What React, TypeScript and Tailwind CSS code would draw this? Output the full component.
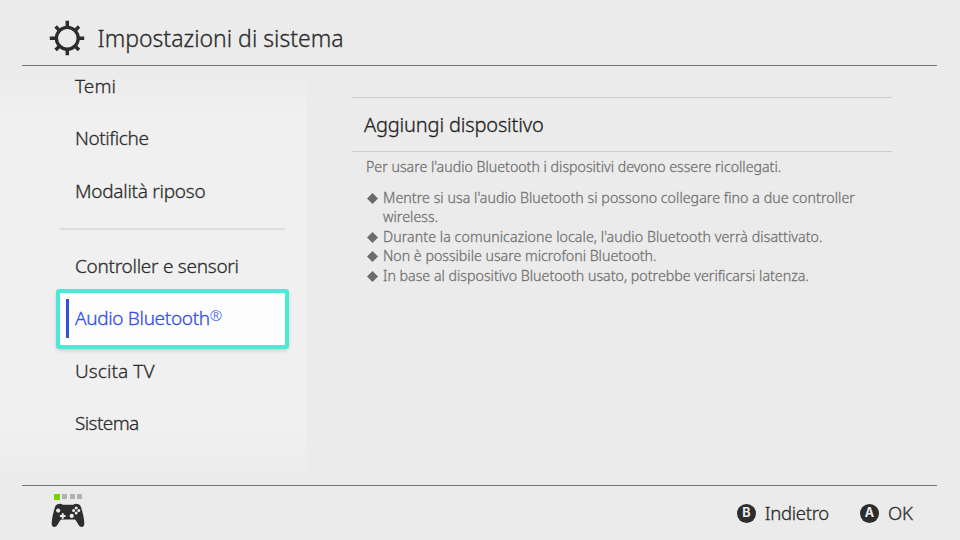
import clsx from "clsx";

type NavItem = { label: string; mark?: string; tracking: string; selected?: boolean; divider?: boolean };

const navItems: NavItem[] = [
  { label: "Temi", tracking: "tracking-[0.1px]" },
  { label: "Notifiche", tracking: "tracking-[-0.4px]" },
  { label: "Modalità riposo", tracking: "tracking-[-0.27px]" },
  { label: "Controller e sensori", tracking: "tracking-[-0.27px]", divider: true },
  { label: "Audio Bluetooth", mark: "®", tracking: "tracking-[-0.33px]", selected: true },
  { label: "Uscita TV", tracking: "tracking-[0.08px]" },
  { label: "Sistema", tracking: "tracking-[-0.6px]" },
];

const notes = [
  { lines: ["Mentre si usa l'audio Bluetooth si possono collegare fino a due controller", "wireless."], tracking: "tracking-[0.05px]" },
  { lines: ["Durante la comunicazione locale, l'audio Bluetooth verrà disattivato."], tracking: "tracking-[0.07px]" },
  { lines: ["Non è possibile usare microfoni Bluetooth."], tracking: "tracking-[0px]" },
  { lines: ["In base al dispositivo Bluetooth usato, potrebbe verificarsi latenza."], tracking: "tracking-[0.01px]" },
];

function GearIcon() {
  return (
    <svg width="36" height="36" viewBox="0 0 36 36" fill="none" stroke="#2d2d2d">
      <circle cx="18.3" cy="18.3" r="10.9" strokeWidth="3.3" />
      <path
        strokeWidth="3.5"
        d="M18.3 .8V7M18.3 29v6.2M.8 18.3H7M29 18.3h6.2M6.6 6.6l3.8 3.8M26.2 26.2l3.8 3.8M30 6.6l-3.8 3.8M10.4 26.2l-3.8 3.8"
      />
    </svg>
  );
}

function ControllerIcon() {
  return (
    <svg width="34" height="25" viewBox="0 0 34 25">
      <path
        fill="#2d2d2d"
        d="M4.2 3.6C5 1.5 7 .6 9.2.7c1 0 1.7.4 2.4 1h10.8c.7-.6 1.4-1 2.4-1 2.2-.1 4.2.8 5 2.9 1.8 5 3.2 11.3 3.5 16.4.2 2.5-.8 4-2.5 4-1.5 0-2.6-.9-3.3-2.2l-2.6-4.4c-.4-.6-.8-.8-1.5-.8H10.6c-.7 0-1.1.2-1.5.8l-2.6 4.4C5.8 23.1 4.7 24 3.2 24 1.5 24 .5 22.5.7 20 1 14.9 2.4 8.6 4.2 3.6z"
      />
      <g fill="#ebebeb">
        <circle cx="7.2" cy="7.6" r="2.1" />
        <circle cx="20.7" cy="12.9" r="2.1" />
        <path d="M10.7 10.3h2v1.7h1.8v1.9h-1.8v1.8h-2v-1.8H8.9v-1.9h1.8z" />
        <circle cx="25.2" cy="4.9" r="1.5" />
        <circle cx="25.2" cy="10.1" r="1.5" />
        <circle cx="22.6" cy="7.5" r="1.5" />
        <circle cx="27.8" cy="7.5" r="1.5" />
      </g>
    </svg>
  );
}

function ButtonHint({ button, label, tracking }: { button: string; label: string; tracking: string }) {
  return (
    <div className="flex items-center">
      <span className="flex h-[19px] w-[19px] items-center justify-center rounded-full bg-[#2d2d2d] pt-px font-['Inter'] text-[12.5px] font-bold leading-none text-[#ebebeb] [-webkit-text-stroke:0px]">
        {button}
      </span>
      <span className={clsx("ml-[9px] text-[18.5px]", tracking)}>{label}</span>
    </div>
  );
}

export default function App() {
  return (
    <div className="flex h-[540px] w-[960px] flex-col overflow-hidden bg-[#ebebeb] font-['Noto_Sans',sans-serif] font-light text-[#2d2d2d] [-webkit-text-stroke:0.3px]">
      <header className="ml-[22px] mr-[23px] flex h-[66px] shrink-0 items-center border-b border-[#777777] pl-[27px] pt-[10px]">
        <GearIcon />
        <h1 className="ml-[12.5px] pt-px text-[23px] leading-none">Impostazioni di sistema</h1>
      </header>

      <div className="flex min-h-0 flex-1">
        <nav className="w-[307px] shrink-0 overflow-hidden bg-[linear-gradient(to_bottom,#ebebeb,#f0f0f0_12%,#f0f0f0_86%,#ebebeb)] pl-[60px]">
          <ul className="-mt-[6px] w-[225px]">
            {navItems.map((item) => (
              <li key={item.label}>
                {item.divider && (
                  <div className="flex h-[22.5px] items-center">
                    <div className="h-[1.5px] w-full bg-[#dcdcdc]" />
                  </div>
                )}
                <div
                  className={clsx(
                    "flex h-[52.5px] items-center whitespace-nowrap text-[19px] leading-none",
                    item.selected
                      ? "rounded-[1px] bg-[#fdfdfd] pl-[6px] text-[#3250e0] shadow-[0_0_0_4px_#47ebd7,0_2px_4px_3px_rgba(0,0,0,0.2)]"
                      : "pl-[15px]",
                  )}
                >
                  {item.selected && <span className="mr-[6px] h-[39px] w-[3px] bg-[#3250e0]" />}
                  <span className={item.tracking}>{item.label}</span>
                  {item.mark && <span className="pb-[6px] text-[15px] [-webkit-text-stroke:0px]">{item.mark}</span>}
                </div>
              </li>
            ))}
          </ul>
        </nav>

        <main className="ml-[45px] w-[540px] pt-[31px]">
          <div className="flex h-[54.5px] items-center border-y border-[#cdcdcd] pl-[12px] pt-px text-[20px] text-[#1f1f1f]">
            <span className="tracking-[-0.17px]">Aggiungi dispositivo</span>
          </div>
          <div className="whitespace-nowrap pl-[14px] text-[14.2px] leading-[19.5px] text-[#737373]">
            <p className="mt-[5px]">Per usare l'audio Bluetooth i dispositivi devono essere ricollegati.</p>
            <ul className="mt-[11.5px]">
              {notes.map((note) => (
                <li key={note.lines[0]} className="flex">
                  <svg className="mt-[5px] mr-[5px] ml-px" width="11" height="11" viewBox="0 0 11 11" fill="#6b6b6b">
                    <path d="M5.5 0 11 5.5 5.5 11 0 5.5z" />
                  </svg>
                  <div className={note.tracking}>
                    {note.lines.map((line) => (
                      <div key={line}>{line}</div>
                    ))}
                  </div>
                </li>
              ))}
            </ul>
          </div>
        </main>
      </div>

      <footer className="ml-[22px] mr-[23px] flex h-[55px] shrink-0 items-center border-t border-[#777777]">
        <div className="ml-[28.5px] flex flex-col pb-[4px]">
          <div className="mb-[3.5px] ml-[3px] flex items-center gap-[2.5px]">
            <span className="h-[6px] w-[6px] bg-[#76d200]" />
            <span className="h-[5px] w-[5px] bg-[#b0b0b0]" />
            <span className="h-[5px] w-[5px] bg-[#b0b0b0]" />
            <span className="h-[5px] w-[5px] bg-[#b0b0b0]" />
          </div>
          <ControllerIcon />
        </div>
        <div className="ml-auto mr-[24px] flex gap-[31px]">
          <ButtonHint button="B" label="Indietro" tracking="tracking-[-0.3px]" />
          <ButtonHint button="A" label="OK" tracking="tracking-[0px]" />
        </div>
      </footer>
    </div>
  );
}
